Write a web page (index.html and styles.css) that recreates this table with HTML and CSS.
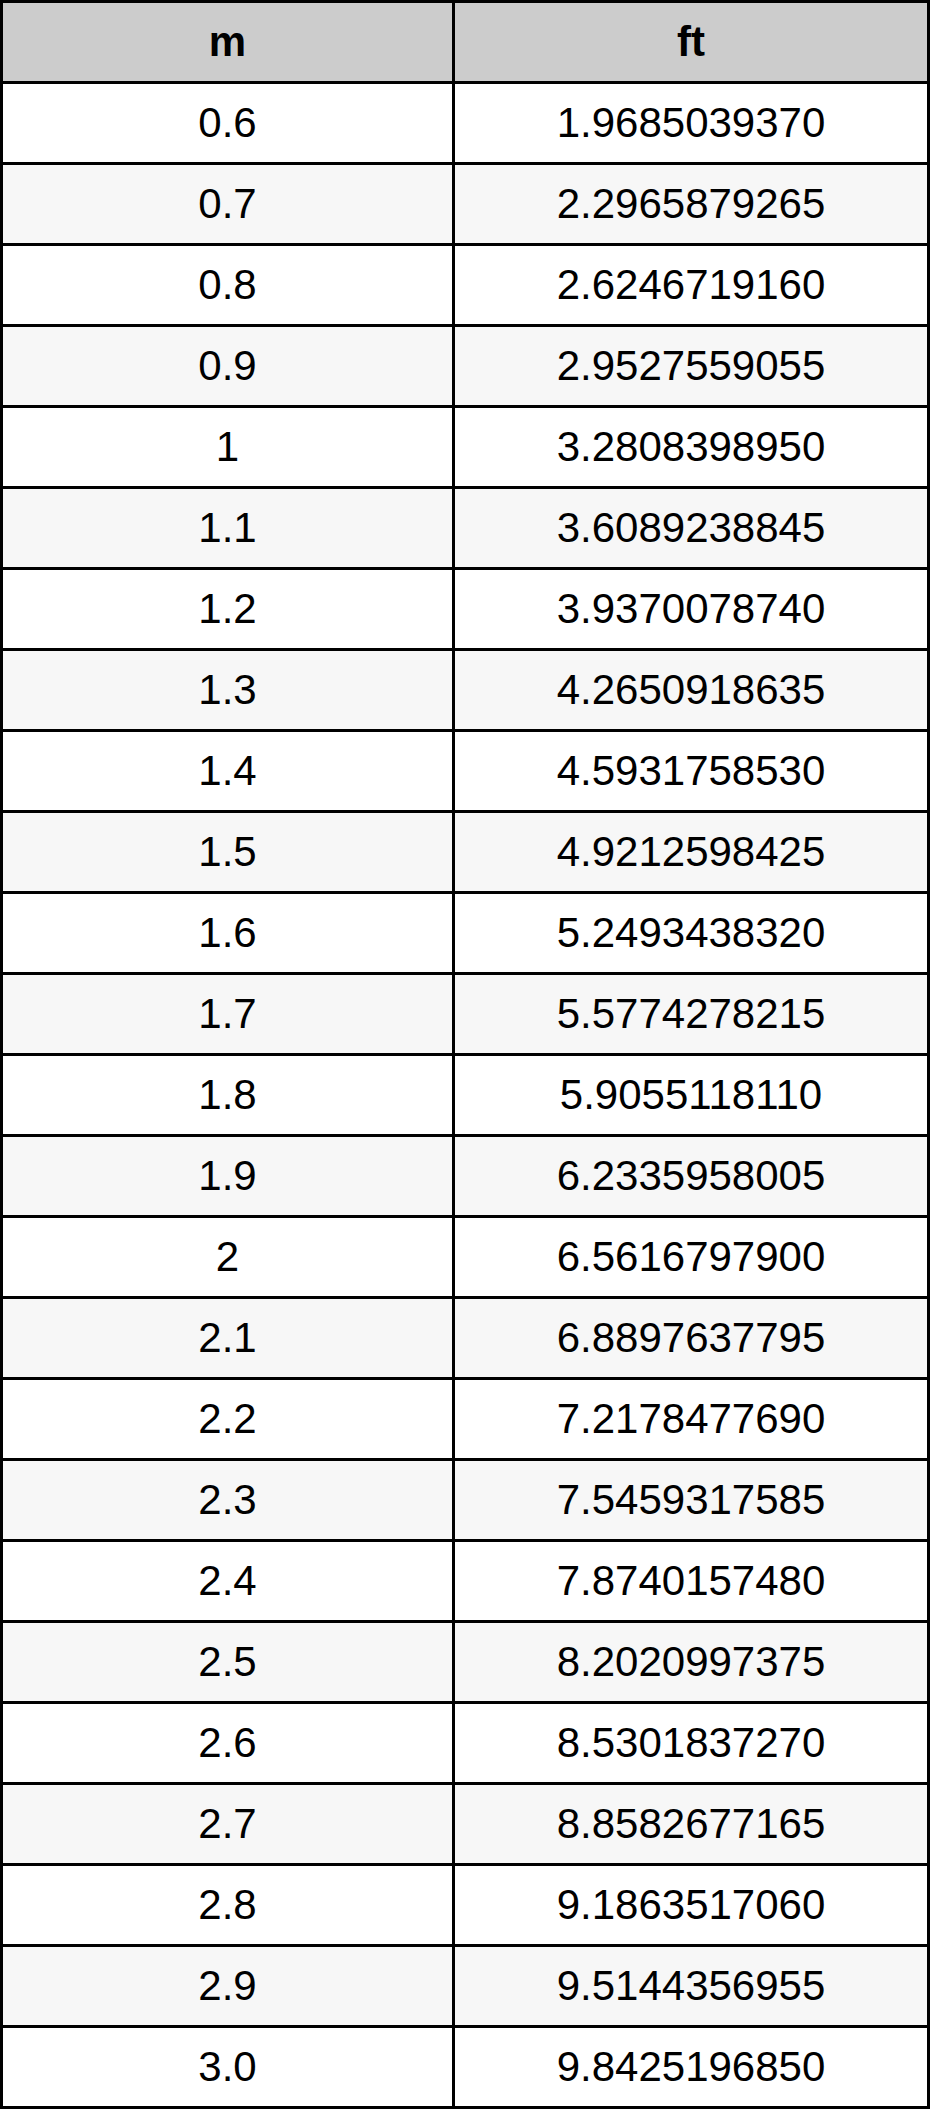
FILE: index.html
```html
<!DOCTYPE html>
<html>
<head>
<meta charset="utf-8">
<title>m to ft</title>
<link rel="stylesheet" href="styles.css">
</head>
<body>
<table class="conv">
<thead>
<tr><th class="c1">m</th><th>ft</th></tr>
</thead>
<tbody>
<tr><td class="c1">0.6</td><td>1.9685039370</td></tr>
<tr><td class="c1">0.7</td><td>2.2965879265</td></tr>
<tr><td class="c1">0.8</td><td>2.6246719160</td></tr>
<tr><td class="c1">0.9</td><td>2.9527559055</td></tr>
<tr><td class="c1">1</td><td>3.2808398950</td></tr>
<tr><td class="c1">1.1</td><td>3.6089238845</td></tr>
<tr><td class="c1">1.2</td><td>3.9370078740</td></tr>
<tr><td class="c1">1.3</td><td>4.2650918635</td></tr>
<tr><td class="c1">1.4</td><td>4.5931758530</td></tr>
<tr><td class="c1">1.5</td><td>4.9212598425</td></tr>
<tr><td class="c1">1.6</td><td>5.2493438320</td></tr>
<tr><td class="c1">1.7</td><td>5.5774278215</td></tr>
<tr><td class="c1">1.8</td><td>5.9055118110</td></tr>
<tr><td class="c1">1.9</td><td>6.2335958005</td></tr>
<tr><td class="c1">2</td><td>6.5616797900</td></tr>
<tr><td class="c1">2.1</td><td>6.8897637795</td></tr>
<tr><td class="c1">2.2</td><td>7.2178477690</td></tr>
<tr><td class="c1">2.3</td><td>7.5459317585</td></tr>
<tr><td class="c1">2.4</td><td>7.8740157480</td></tr>
<tr><td class="c1">2.5</td><td>8.2020997375</td></tr>
<tr><td class="c1">2.6</td><td>8.5301837270</td></tr>
<tr><td class="c1">2.7</td><td>8.8582677165</td></tr>
<tr><td class="c1">2.8</td><td>9.1863517060</td></tr>
<tr><td class="c1">2.9</td><td>9.5144356955</td></tr>
<tr><td class="c1">3.0</td><td>9.8425196850</td></tr>
</tbody>
</table>
</body>
</html>
```
FILE: styles.css
```css
html, body {
  margin: 0;
  padding: 0;
  background: #ffffff;
}

.conv {
  width: 930px;
  table-layout: fixed;
  border-collapse: separate;
  border-spacing: 0;
  border-top: 3px solid #000000;
  border-left: 3px solid #000000;
  font-family: "Liberation Sans", Arial, sans-serif;
  font-size: 42px;
  color: #000000;
}

.conv th,
.conv td {
  height: 78px;
  padding: 0;
  text-align: center;
  vertical-align: middle;
  border-right: 3px solid #000000;
  border-bottom: 3px solid #000000;
  line-height: 1;
}

.conv .c1 {
  width: 449px;
}

.conv th {
  background: #cccccc;
  font-weight: bold;
}

.conv tbody tr:nth-child(odd) td {
  background: #ffffff;
}

.conv tbody tr:nth-child(even) td {
  background: #f7f7f7;
}
```
